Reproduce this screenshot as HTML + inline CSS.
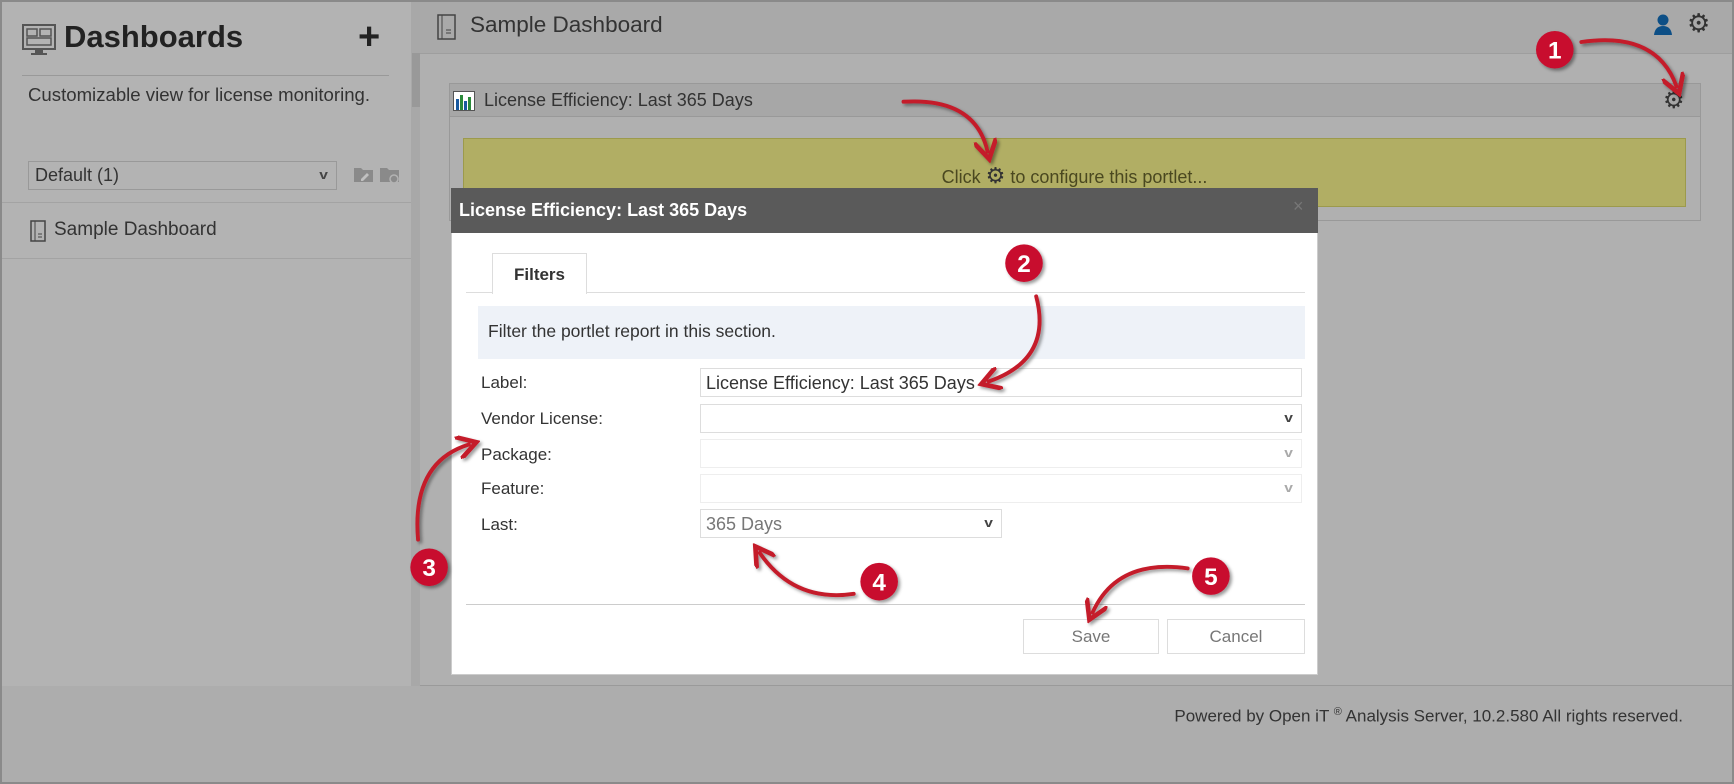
<!DOCTYPE html>
<html><head><meta charset="utf-8"><style>
*{box-sizing:border-box;margin:0;padding:0}
body{width:1734px;height:784px;overflow:hidden;background:#adadad;font-family:"Liberation Sans",sans-serif;position:relative;color:#333}
.abs{position:absolute}
#frame{left:0;top:0;width:1734px;height:784px;border:2px solid #8a8a8a}
#side{left:2px;top:2px;width:409px;height:684px;background:#b3b3b3}
#strip{left:411px;top:2px;width:9px;height:684px;background:#a8a8a8}
#handle{left:412px;top:53px;width:8px;height:54px;background:#999}
#mainhdr{left:420px;top:2px;width:1312px;height:52px;background:#a9a9a9;border-bottom:1px solid #9e9e9e}
#main{left:420px;top:54px;width:1312px;height:632px;background:#b0b0b0;border-bottom:1px solid #9a9a9a}
.ttl{font-size:31px;font-weight:bold;color:#222}
.sel{border:1px solid #999;background:#b3b3b3;font-size:18px;color:#333;padding:3px 6px}
#portlet{left:449px;top:83px;width:1252px;height:138px;border:1px solid #999;background:#b0b0b0}
#phdr{left:449px;top:83px;width:1252px;height:34px;background:#a7a7a7;border:1px solid #999}
#yel{left:463px;top:138px;width:1223px;height:69px;background:#b1ae64;border:1px solid #9c9a4c;text-align:center;font-size:18px;color:#4a4820;padding-top:24px}
#dlg{left:451px;top:188px;width:867px;height:487px;background:#fff;border:1px solid #ccc}
#dhdr{left:451px;top:188px;width:867px;height:45px;background:#5a5a5a;color:#fff;font-weight:bold;font-size:18px;padding:12px 8px}
.lbl{font-size:17px;color:#333;left:481px}
.inp{left:700px;width:602px;height:29px;border:1px solid #ddd;background:#fff}
.chev{position:absolute;right:9px;top:5px;font-size:13px;font-weight:bold;color:#444;transform:scaleX(1.2)}
.btn{height:35px;border:1px solid #ddd;background:#fff;font-size:17px;color:#777;text-align:center;padding-top:7px}
</style></head><body>
<div class="abs" id="side"></div>
<div class="abs" id="strip"></div>
<div class="abs" id="handle"></div>
<div class="abs" id="mainhdr"></div>
<div class="abs" id="main"></div>
<div class="abs" id="frame"></div>

<svg class="abs" style="left:22px;top:24px" width="34" height="32" viewBox="0 0 34 32"><rect x="1" y="1" width="32" height="24" fill="none" stroke="#555" stroke-width="2"/><rect x="5" y="5" width="10" height="7" fill="none" stroke="#555" stroke-width="1.5"/><rect x="18" y="5" width="11" height="7" fill="none" stroke="#555" stroke-width="1.5"/><rect x="5" y="14" width="24" height="7" fill="none" stroke="#555" stroke-width="1.5"/><rect x="13" y="25" width="8" height="4" fill="#555"/><rect x="9" y="29" width="16" height="2" fill="#555"/></svg>
<div class="abs ttl" style="left:64px;top:19px">Dashboards</div>
<div class="abs" style="left:358px;top:16px;font-size:38px;font-weight:bold;color:#222">+</div>
<div class="abs" style="left:22px;top:75px;width:367px;height:1px;background:#999"></div>
<div class="abs" style="left:28px;top:84px;font-size:18.6px;color:#333">Customizable view for license monitoring.</div>
<div class="abs sel" style="left:28px;top:161px;width:309px;height:29px">Default (1)<span class="chev">v</span></div>
<svg class="abs" style="left:353px;top:164px" width="48" height="20"><path d="M1 4h7l2 2h10v12H1z" fill="#8a8a8a"/><path d="M8 15l6-6 2 2-6 6H8z" fill="#c0c0c0"/><path d="M27 4h7l2 2h10v12H27z" fill="#8a8a8a"/><circle cx="41" cy="15" r="4" fill="#8a8a8a" stroke="#b3b3b3" stroke-width="1.5"/></svg>
<div class="abs" style="left:2px;top:202px;width:409px;height:1px;background:#a3a3a3"></div>
<svg class="abs" style="left:30px;top:220px" width="16" height="22"><rect x="1" y="1" width="14" height="20" fill="none" stroke="#444" stroke-width="1.5"/><line x1="5" y1="1" x2="5" y2="21" stroke="#444"/><line x1="8" y1="14" x2="12" y2="14" stroke="#444"/><line x1="8" y1="17" x2="12" y2="17" stroke="#444"/></svg>
<div class="abs" style="left:54px;top:219px;font-size:19px;color:#333">Sample Dashboard</div>
<div class="abs" style="left:2px;top:258px;width:409px;height:1px;background:#a3a3a3"></div>

<svg class="abs" style="left:437px;top:14px" width="19" height="26"><rect x="1" y="1" width="17" height="24" fill="none" stroke="#444" stroke-width="1.5"/><line x1="5" y1="1" x2="5" y2="25" stroke="#444"/><line x1="9" y1="16" x2="14" y2="16" stroke="#444"/><line x1="9" y1="19" x2="14" y2="19" stroke="#444"/></svg>
<div class="abs" style="left:470px;top:12px;font-size:22.5px;color:#333">Sample Dashboard</div>
<svg class="abs" style="left:1653px;top:14px" width="20" height="22"><circle cx="10" cy="6" r="5.5" fill="#0d4f86"/><path d="M1 21 Q2 12 10 12 Q18 12 19 21Z" fill="#0d4f86"/></svg>
<div class="abs" style="left:1687px;top:8px;font-size:26px;color:#333">&#9881;</div>

<div class="abs" id="portlet"></div>
<div class="abs" id="phdr"></div>
<svg class="abs" style="left:453px;top:91px" width="22" height="20"><rect x="0.5" y="0.5" width="21" height="19" fill="#fff" stroke="#555"/><rect x="3" y="8" width="3" height="11" fill="#1a5aa0"/><rect x="7" y="4" width="3" height="15" fill="#2a8a3a"/><rect x="11" y="10" width="3" height="9" fill="#1a5aa0"/><rect x="15" y="6" width="3" height="13" fill="#2a8a3a"/></svg>
<div class="abs" style="left:484px;top:90px;font-size:18px;color:#333">License Efficiency: Last 365 Days</div>
<div class="abs" style="left:1663px;top:86px;font-size:24px;color:#333">&#9881;</div>
<div class="abs" id="yel">Click <span style="font-size:22px;color:#333">&#9881;</span> to configure this portlet...</div>

<div class="abs" id="dlg"></div>
<div class="abs" id="dhdr">License Efficiency: Last 365 Days</div>
<div class="abs" style="left:1293px;top:196px;color:#777;font-size:18px">×</div>
<div class="abs" style="left:466px;top:292px;width:839px;height:1px;background:#ddd"></div>
<div class="abs" style="left:492px;top:253px;width:95px;height:41px;background:#fff;border:1px solid #ddd;border-bottom:none;font-weight:bold;font-size:17px;color:#333;text-align:center;padding-top:11px">Filters</div>
<div class="abs" style="left:478px;top:306px;width:827px;height:53px;background:#eef2f8;font-size:17.5px;color:#333;padding:15px 10px">Filter the portlet report in this section.</div>
<div class="abs lbl" style="top:373px">Label:</div>
<div class="abs lbl" style="top:409px">Vendor License:</div>
<div class="abs lbl" style="top:445px">Package:</div>
<div class="abs lbl" style="top:479px">Feature:</div>
<div class="abs lbl" style="top:515px">Last:</div>
<div class="abs inp" style="top:368px;font-size:18px;color:#333;padding:4px 5px">License Efficiency: Last 365 Days</div>
<div class="abs inp" style="top:404px"><span class="chev">v</span></div>
<div class="abs inp" style="top:439px;border-color:#eee"><span class="chev" style="color:#aaa">v</span></div>
<div class="abs inp" style="top:474px;border-color:#eee"><span class="chev" style="color:#aaa">v</span></div>
<div class="abs inp" style="top:509px;width:302px;font-size:18px;color:#777;padding:4px 5px">365 Days<span class="chev">v</span></div>
<div class="abs" style="left:466px;top:604px;width:839px;height:1px;background:#ccc"></div>
<div class="abs btn" style="left:1023px;top:619px;width:136px">Save</div>
<div class="abs btn" style="left:1167px;top:619px;width:138px">Cancel</div>

<div class="abs" style="left:1050px;top:706px;width:633px;text-align:right;font-size:17px;color:#333">Powered by Open iT <sup style="font-size:11px">®</sup> Analysis Server, 10.2.580 All rights reserved.</div>

<svg class="abs" style="left:0;top:0" width="1734" height="784" viewBox="0 0 1568 709">
<defs>
<marker id="ah" markerWidth="6" markerHeight="6" refX="3" refY="3" orient="auto" markerUnits="strokeWidth"><path d="M0,0 L5,3 L0,6" fill="none" stroke="#c41a2b" stroke-width="1.2"/></marker>
<filter id="sh"><feDropShadow dx="2" dy="2" stdDeviation="1.5" flood-color="#000" flood-opacity="0.4"/></filter>
</defs>
<g fill="none" stroke="#c41a2b" stroke-width="3.5" stroke-linecap="round" marker-end="url(#ah)" filter="url(#sh)">
<path d="M1430,38 Q1498,28 1516,78"/>
<path d="M817,92 Q882,88 893,137"/>
<path d="M937,268 Q952,325 894,345"/>
<path d="M378,488 Q372,418 424,402"/>
<path d="M772,537 Q718,545 687,500"/>
<path d="M1074,514 Q1010,505 988,554"/>
</g>
<g filter="url(#sh)" font-family="Liberation Sans, sans-serif" font-weight="bold" font-size="22" fill="#fff" text-anchor="middle">
<circle cx="1406" cy="45" r="17" fill="#c8102e"/><text x="1406" y="53">1</text>
<circle cx="926" cy="238" r="17" fill="#c8102e"/><text x="926" y="246">2</text>
<circle cx="388" cy="513" r="17" fill="#c8102e"/><text x="388" y="521">3</text>
<circle cx="795" cy="526" r="17" fill="#c8102e"/><text x="795" y="534">4</text>
<circle cx="1095" cy="521" r="17" fill="#c8102e"/><text x="1095" y="529">5</text>
</g>
</svg>
</body></html>
